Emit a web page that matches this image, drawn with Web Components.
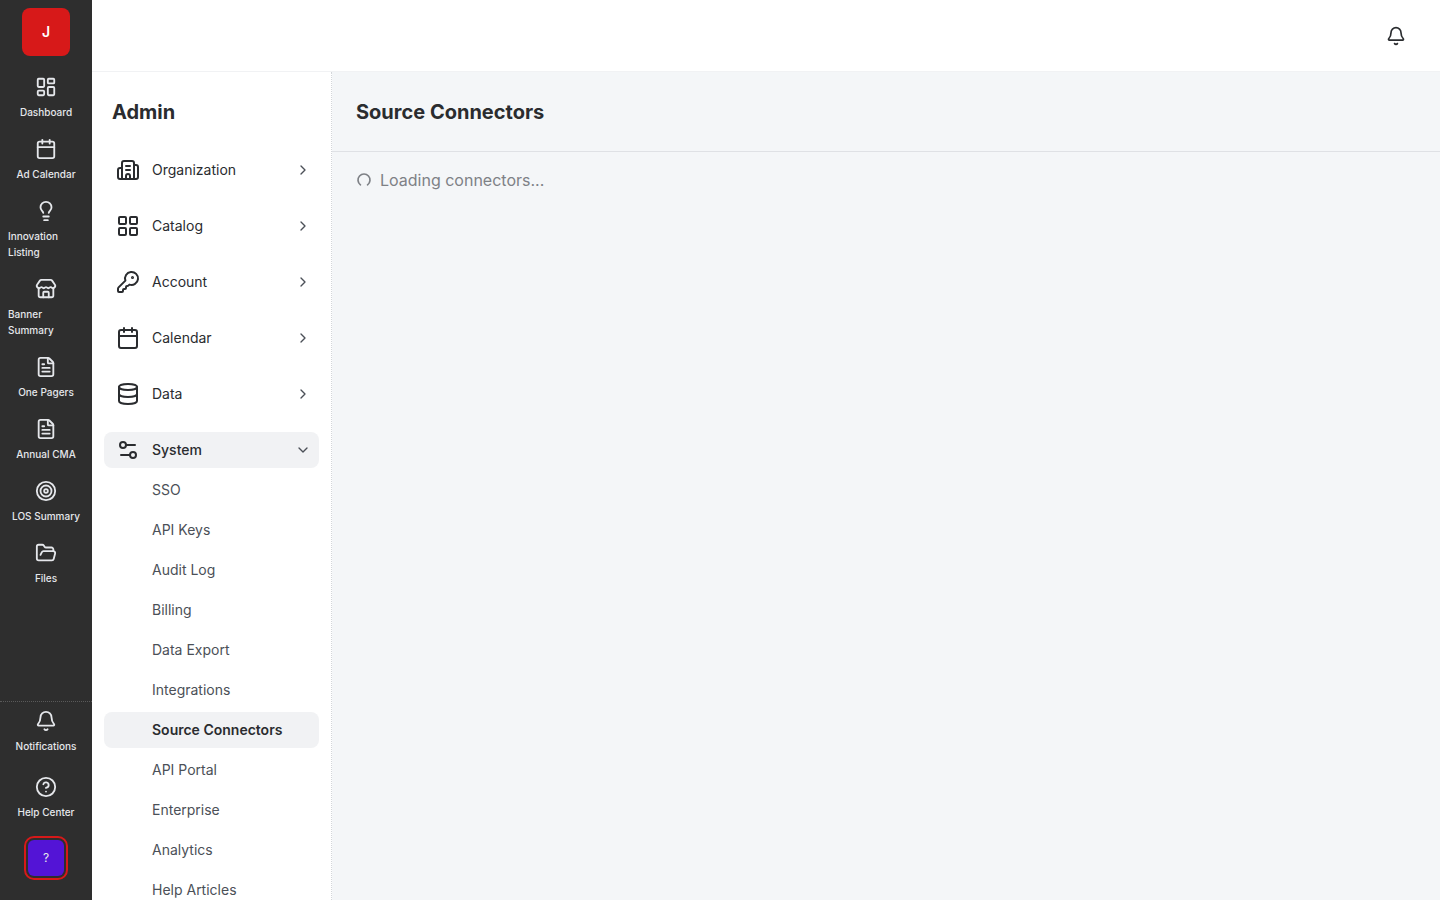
<!DOCTYPE html>
<html lang="en">
<head>
<meta charset="utf-8">
<meta name="viewport" content="width=device-width, initial-scale=1">
<title>Source Connectors</title>
<style>
  :root {
    --color-rail: #2e2e2e;
    --color-rail-text: #e5e7eb;
    --color-brand: #d71919;
    --color-avatar: #5314d6;
    --color-text: #2a2c2f;
    --color-text-soft: #4b5057;
    --color-text-muted: #7e8186;
    --color-surface: #fff;
    --color-page: #f4f6f8;
    --color-active: #f1f2f4;
    --color-border: #dfe1e5;
    --color-border-soft: #f1f2f4;
  }
  body {
    margin: 0;
    font-family: Inter, "Liberation Sans", sans-serif;
    font-size: 14px;
    line-height: 20px;
    color: var(--color-text);
  }
</style>
</head>
<body>

<app-shell>
  <nav-rail slot="rail">
    <rail-item icon="dashboard">Dashboard</rail-item>
    <rail-item icon="calendar">Ad Calendar</rail-item>
    <rail-item icon="lightbulb">Innovation Listing</rail-item>
    <rail-item icon="store">Banner Summary</rail-item>
    <rail-item icon="file">One Pagers</rail-item>
    <rail-item icon="file">Annual CMA</rail-item>
    <rail-item icon="target">LOS Summary</rail-item>
    <rail-item icon="folder">Files</rail-item>
    <rail-item slot="footer" icon="bell">Notifications</rail-item>
    <rail-item slot="footer" icon="help">Help Center</rail-item>
  </nav-rail>

  <top-bar slot="header"></top-bar>

  <side-menu slot="menu" heading="Admin">
    <menu-group icon="building" label="Organization"></menu-group>
    <menu-group icon="grid" label="Catalog"></menu-group>
    <menu-group icon="key" label="Account"></menu-group>
    <menu-group icon="calendar" label="Calendar"></menu-group>
    <menu-group icon="database" label="Data"></menu-group>
    <menu-group icon="sliders" label="System" open>
      <menu-link>SSO</menu-link>
      <menu-link>API Keys</menu-link>
      <menu-link>Audit Log</menu-link>
      <menu-link>Billing</menu-link>
      <menu-link>Data Export</menu-link>
      <menu-link>Integrations</menu-link>
      <menu-link active>Source Connectors</menu-link>
      <menu-link>API Portal</menu-link>
      <menu-link>Enterprise</menu-link>
      <menu-link>Analytics</menu-link>
      <menu-link>Help Articles</menu-link>
    </menu-group>
  </side-menu>

  <page-view heading="Source Connectors">
    <loading-status>Loading connectors...</loading-status>
  </page-view>
</app-shell>

<script>
const ICONS = {
  dashboard: `<rect width="7" height="9" x="3" y="3" rx="1"/><rect width="7" height="5" x="14" y="3" rx="1"/><rect width="7" height="9" x="14" y="12" rx="1"/><rect width="7" height="5" x="3" y="16" rx="1"/>`,
  calendar: `<path d="M8 2v4"/><path d="M16 2v4"/><rect width="18" height="18" x="3" y="4" rx="2"/><path d="M3 10h18"/>`,
  lightbulb: `<path d="M15 14c.2-1 .7-1.7 1.5-2.5 1-.9 1.5-2.2 1.5-3.5A6 6 0 0 0 6 8c0 1 .2 2.2 1.5 3.5.7.7 1.3 1.5 1.5 2.5"/><path d="M9 18h6"/><path d="M10 22h4"/>`,
  store: `<path d="M15 21v-5a1 1 0 0 0-1-1h-4a1 1 0 0 0-1 1v5"/><path d="M17.774 10.31a1.12 1.12 0 0 0-1.549 0 2.5 2.5 0 0 1-3.451 0 1.12 1.12 0 0 0-1.548 0 2.5 2.5 0 0 1-3.452 0 1.12 1.12 0 0 0-1.549 0 2.5 2.5 0 0 1-3.77-3.248l2.889-4.184A2 2 0 0 1 7 2h10a2 2 0 0 1 1.653.873l2.895 4.192a2.5 2.5 0 0 1-3.774 3.244"/><path d="M4 10.95V19a2 2 0 0 0 2 2h12a2 2 0 0 0 2-2v-8.05"/>`,
  file: `<path d="M6 22a2 2 0 0 1-2-2V4a2 2 0 0 1 2-2h8a2.4 2.4 0 0 1 1.704.706l3.588 3.588A2.4 2.4 0 0 1 20 8v12a2 2 0 0 1-2 2z"/><path d="M14 2v5a1 1 0 0 0 1 1h5"/><path d="M10 9H8"/><path d="M16 13H8"/><path d="M16 17H8"/>`,
  target: `<circle cx="12" cy="12" r="10"/><circle cx="12" cy="12" r="6"/><circle cx="12" cy="12" r="2"/>`,
  folder: `<path d="m6 14 1.5-2.9A2 2 0 0 1 9.24 10H20a2 2 0 0 1 1.94 2.5l-1.54 6a2 2 0 0 1-1.95 1.5H4a2 2 0 0 1-2-2V5a2 2 0 0 1 2-2h3.9a2 2 0 0 1 1.69.9l.81 1.2a2 2 0 0 0 1.67.9H18a2 2 0 0 1 2 2v2"/>`,
  bell: `<path d="M10.268 21a2 2 0 0 0 3.464 0"/><path d="M3.262 15.326A1 1 0 0 0 4 17h16a1 1 0 0 0 .74-1.673C19.41 13.956 18 12.499 18 8A6 6 0 0 0 6 8c0 4.499-1.411 5.956-2.738 7.326"/>`,
  help: `<circle cx="12" cy="12" r="10"/><path d="M9.09 9a3 3 0 0 1 5.83 1c0 2-3 3-3 3"/><path d="M12 17h.01"/>`,
  building: `<path d="M10 12h4"/><path d="M10 8h4"/><path d="M14 21v-3a2 2 0 0 0-4 0v3"/><path d="M6 10H4a2 2 0 0 0-2 2v7a2 2 0 0 0 2 2h16a2 2 0 0 0 2-2V9a2 2 0 0 0-2-2h-2"/><path d="M6 21V5a2 2 0 0 1 2-2h8a2 2 0 0 1 2 2v16"/>`,
  grid: `<rect width="7" height="7" x="3" y="3" rx="1"/><rect width="7" height="7" x="14" y="3" rx="1"/><rect width="7" height="7" x="14" y="14" rx="1"/><rect width="7" height="7" x="3" y="14" rx="1"/>`,
  key: `<path d="M2.586 17.414A2 2 0 0 0 2 18.828V21a1 1 0 0 0 1 1h3a1 1 0 0 0 1-1v-1a1 1 0 0 1 1-1h1a1 1 0 0 0 1-1v-1a1 1 0 0 1 1-1h.172a2 2 0 0 0 1.414-.586l.814-.814a6.5 6.5 0 1 0-4-4z"/><circle cx="16.5" cy="7.5" r=".5" fill="currentColor"/>`,
  database: `<ellipse cx="12" cy="5" rx="9" ry="3"/><path d="M3 5V19A9 3 0 0 0 21 19V5"/><path d="M3 12A9 3 0 0 0 21 12"/>`,
  sliders: `<path d="M14 17H5"/><path d="M19 7h-9"/><circle cx="17" cy="17" r="3"/><circle cx="7" cy="7" r="3"/>`,
  'chevron-right': `<path d="m9 18 6-6-6-6"/>`,
  'chevron-down': `<path d="m6 9 6 6 6-6"/>`,
  loader: `<path d="M21 12a9 9 0 1 1-6.219-8.56" transform="rotate(126 12 12)" stroke-width="2.5"/>`,
};

function attach(el, html) {
  const template = document.createElement('template');
  template.innerHTML = html;
  el.attachShadow({ mode: 'open' }).appendChild(template.content.cloneNode(true));
}

class UiIcon extends HTMLElement {
  static observedAttributes = ['name'];

  constructor() {
    super();
    attach(this, `
      <style>
        :host { display: block; flex: none; width: 20px; height: 20px; }
        svg { display: block; width: 100%; height: 100%; }
      </style>
      <svg viewBox="0 0 24 24" fill="none" stroke="currentColor" stroke-width="2"
        stroke-linecap="round" stroke-linejoin="round" aria-hidden="true"></svg>
    `);
  }

  attributeChangedCallback(attr, previous, name) {
    this.shadowRoot.querySelector('svg').innerHTML = ICONS[name] || '';
  }
}

class AppShell extends HTMLElement {
  constructor() {
    super();
    attach(this, `
      <style>
        :host {
          display: grid;
          grid-template-columns: 92px 240px minmax(0, 1fr);
          grid-template-rows: 72px minmax(0, 1fr);
          grid-template-areas: "rail header header" "rail menu main";
          height: 100vh;
          overflow: hidden;
          background: var(--color-page);
        }
        slot { display: grid; min-height: 0; }
        .rail { grid-area: rail; }
        .header { grid-area: header; }
        .menu { grid-area: menu; }
        .main { grid-area: main; }
      </style>
      <slot class="rail" name="rail"></slot>
      <slot class="header" name="header"></slot>
      <slot class="menu" name="menu"></slot>
      <slot class="main"></slot>
    `);
  }
}

class NavRail extends HTMLElement {
  constructor() {
    super();
    attach(this, `
      <style>
        :host {
          display: flex;
          flex-direction: column;
          background: var(--color-rail);
          color: var(--color-rail-text);
        }
        button {
          flex: none;
          align-self: center;
          padding: 0;
          border: none;
          border-radius: 8px;
          font: inherit;
          cursor: pointer;
        }
        .logo {
          width: 48px;
          height: 48px;
          margin-top: 8px;
          background: var(--color-brand);
          color: #fff;
          font-weight: 600;
        }
        nav {
          flex: 1;
          display: flex;
          flex-direction: column;
          gap: 2px;
          padding-top: 12px;
          min-height: 0;
          overflow: hidden;
        }
        .footer {
          display: flex;
          flex-direction: column;
          gap: 6px;
          padding-bottom: 24px;
          border-top: 1px dotted #5a5a5a;
        }
        .avatar {
          width: 36px;
          height: 36px;
          margin-top: 6px;
          border-radius: 6px;
          outline: 2px solid var(--color-brand);
          outline-offset: 2px;
          background: var(--color-avatar);
          color: var(--color-rail-text);
          font-size: 12px;
        }
      </style>
      <button class="logo" aria-label="Switch workspace">J</button>
      <nav aria-label="Main"><slot></slot></nav>
      <div class="footer">
        <slot name="footer"></slot>
        <button class="avatar" aria-label="Profile">?</button>
      </div>
    `);
  }
}

class RailItem extends HTMLElement {
  constructor() {
    super();
    attach(this, `
      <style>
        :host { display: block; flex: none; }
        a {
          display: flex;
          flex-direction: column;
          align-items: center;
          gap: 6px;
          padding: 8px;
          color: inherit;
          font-size: 10px;
          line-height: 16px;
          font-weight: 500;
          text-decoration: none;
        }
        a:hover { background: #3a3a3a; }
        ui-icon { width: 22px; height: 22px; }
      </style>
      <a href="#"><ui-icon name="${this.getAttribute('icon')}"></ui-icon><span><slot></slot></span></a>
    `);
  }
}

class TopBar extends HTMLElement {
  constructor() {
    super();
    attach(this, `
      <style>
        :host {
          display: flex;
          align-items: center;
          justify-content: flex-end;
          padding: 0 24px;
          background: var(--color-surface);
          border-bottom: 1px solid var(--color-border-soft);
        }
        button {
          display: grid;
          place-items: center;
          width: 40px;
          height: 40px;
          padding: 0;
          border: none;
          border-radius: 8px;
          background: none;
          color: var(--color-text);
          cursor: pointer;
        }
      </style>
      <button aria-label="Notifications"><ui-icon name="bell"></ui-icon></button>
    `);
  }
}

class SideMenu extends HTMLElement {
  constructor() {
    super();
    attach(this, `
      <style>
        :host {
          display: block;
          padding: 0 12px;
          background: var(--color-surface);
          border-right: 1px dotted #d3d6da;
          overflow-y: auto;
          scrollbar-width: none;
        }
        h2 {
          margin: 0;
          padding: 26px 8px;
          font-size: 20px;
          line-height: 28px;
          font-weight: 700;
        }
        nav {
          display: flex;
          flex-direction: column;
          gap: 20px;
        }
      </style>
      <h2>${this.getAttribute('heading')}</h2>
      <nav aria-label="${this.getAttribute('heading')}"><slot></slot></nav>
    `);
  }
}

class MenuGroup extends HTMLElement {
  static observedAttributes = ['open'];

  constructor() {
    super();
    attach(this, `
      <style>
        :host { display: block; }
        button {
          display: flex;
          align-items: center;
          gap: 12px;
          width: 100%;
          height: 36px;
          padding: 0 8px 0 12px;
          border: none;
          border-radius: 8px;
          background: none;
          color: inherit;
          font: inherit;
          text-align: left;
          cursor: pointer;
        }
        .icon { width: 24px; height: 24px; }
        .label { flex: 1; }
        .chevron { width: 16px; height: 16px; color: var(--color-text-soft); }
        .items {
          display: none;
          flex-direction: column;
          gap: 4px;
          padding-top: 4px;
        }
        :host([open]) button { background: var(--color-active); font-weight: 500; }
        :host([open]) .items { display: flex; }
      </style>
      <button aria-expanded="false">
        <ui-icon class="icon" name="${this.getAttribute('icon')}"></ui-icon>
        <span class="label">${this.getAttribute('label')}</span>
        <ui-icon class="chevron" name="chevron-right"></ui-icon>
      </button>
      <div class="items"><slot></slot></div>
    `);
    this.shadowRoot.querySelector('button').addEventListener('click', () => {
      this.toggleAttribute('open');
    });
  }

  attributeChangedCallback() {
    const open = this.hasAttribute('open');
    this.shadowRoot.querySelector('button').setAttribute('aria-expanded', open);
    this.shadowRoot
      .querySelector('.chevron')
      .setAttribute('name', open ? 'chevron-down' : 'chevron-right');
  }
}

class MenuLink extends HTMLElement {
  constructor() {
    super();
    attach(this, `
      <style>
        :host { display: block; }
        a {
          display: block;
          padding: 8px 12px 8px 48px;
          border-radius: 8px;
          color: var(--color-text-soft);
          text-decoration: none;
        }
        a:hover { background: var(--color-active); }
        :host([active]) a {
          background: var(--color-active);
          color: var(--color-text);
          font-weight: 600;
        }
      </style>
      <a href="#"><slot></slot></a>
    `);
  }
}

class PageView extends HTMLElement {
  constructor() {
    super();
    attach(this, `
      <style>
        :host { display: block; min-width: 0; overflow-y: auto; }
        header {
          padding: 26px 24px 25px;
          border-bottom: 1px solid var(--color-border);
        }
        h1 {
          margin: 0;
          font-size: 20px;
          line-height: 28px;
          font-weight: 700;
        }
        main { padding: 16px 24px; }
      </style>
      <header><h1>${this.getAttribute('heading')}</h1></header>
      <main><slot></slot></main>
    `);
  }
}

class LoadingStatus extends HTMLElement {
  constructor() {
    super();
    attach(this, `
      <style>
        :host {
          display: flex;
          align-items: center;
          gap: 8px;
          color: var(--color-text-muted);
          font-size: 16px;
          line-height: 24px;
        }
        ui-icon { width: 16px; height: 16px; }
      </style>
      <ui-icon name="loader"></ui-icon>
      <span role="status"><slot></slot></span>
    `);
  }
}

customElements.define('ui-icon', UiIcon);
customElements.define('app-shell', AppShell);
customElements.define('nav-rail', NavRail);
customElements.define('rail-item', RailItem);
customElements.define('top-bar', TopBar);
customElements.define('side-menu', SideMenu);
customElements.define('menu-group', MenuGroup);
customElements.define('menu-link', MenuLink);
customElements.define('page-view', PageView);
customElements.define('loading-status', LoadingStatus);
</script>
</body>
</html>
